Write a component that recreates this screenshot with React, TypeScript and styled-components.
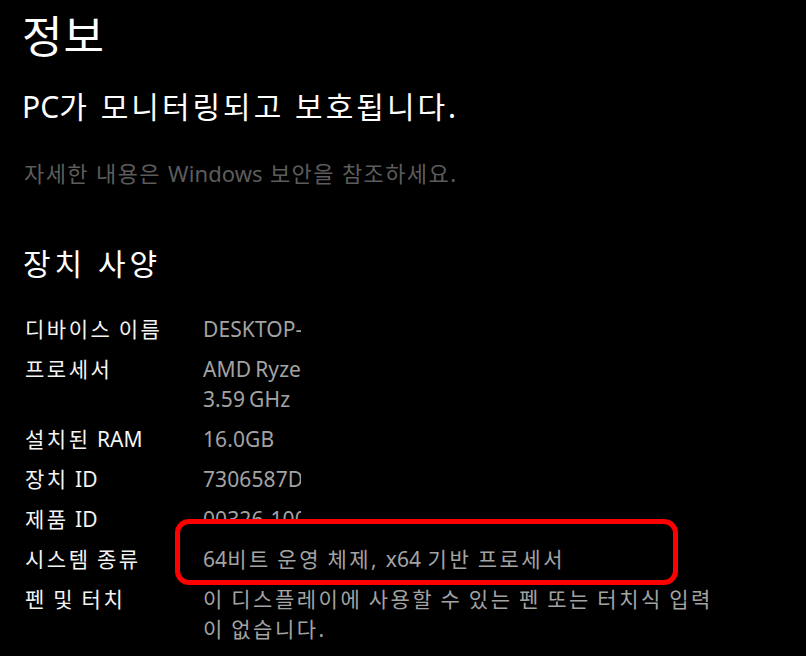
import React from "react";
import styled, { createGlobalStyle } from "styled-components";

const Global = createGlobalStyle`
  html, body { margin: 0; padding: 0; background: #000; }
  body {
    font-family: "Noto Sans", "Noto Sans CJK KR", sans-serif;
    color: #fff;
    width: 806px;
    height: 656px;
    overflow: hidden;
  }
`;

const Page = styled.main`
  display: flex;
  flex-direction: column;
  padding: 6px 0 0 22px;
`;

const Title = styled.h1`
  margin: 0;
  font-size: 44px;
  font-weight: 400;
  line-height: 60px;
  letter-spacing: 1px;
  color: #fff;
`;

const Headline = styled.h2`
  margin: 21px 0 0;
  font-size: 30px;
  font-weight: 400;
  line-height: 40px;
  letter-spacing: 3px;
  color: #fff;
`;

const Hint = styled.p`
  margin: 31px 0 0 2px;
  font-size: 22px;
  line-height: 30px;
  letter-spacing: 1.4px;
  color: #5c5c5c;
`;

const SectionTitle = styled.h2`
  margin: 56px 0 0 1px;
  font-size: 30px;
  font-weight: 400;
  line-height: 40px;
  letter-spacing: 4px;
  color: #fff;
`;

const Latin = styled.span`
  letter-spacing: 0.1px;
`;

const Specs = styled.dl`
  margin: 30px 0 0 3px;
  display: grid;
  grid-template-columns: 178px 522px;
  row-gap: 10px;
  font-size: 21px;
  line-height: 30px;
  letter-spacing: 2.5px;
  word-spacing: -1.5px;
`;

const Label = styled.dt`
  margin: 0;
  color: #f4f4f4;
`;

const Value = styled.dd<{ $clip?: boolean }>`
  margin: 0;
  position: relative;
  color: #a3a3a3;
  ${(p) =>
    p.$clip &&
    `
    max-width: 98px;
    overflow: hidden;
    white-space: nowrap;
  `}
`;

const ClipLine = styled.span`
  display: block;
  max-width: 98px;
  overflow: hidden;
  white-space: nowrap;
`;

const Highlight = styled.span`
  position: absolute;
  top: -25px;
  left: -28px;
  width: 503px;
  height: 66px;
  box-sizing: border-box;
  border: 5px solid #ff0000;
  border-radius: 14px;
  background: #000;
  z-index: 1;
`;

const Front = styled.span`
  position: relative;
  z-index: 2;
`;

export default function App() {
  return (
    <>
      <Global />
      <Page>
        <Title>정보</Title>
        <Headline>
          <Latin>PC</Latin>가 모니터링되고 보호됩니다.
        </Headline>
        <Hint>
          자세한 내용은 <Latin>Windows</Latin> 보안을 참조하세요.
        </Hint>
        <SectionTitle>장치 사양</SectionTitle>
        <Specs>
          <Label>디바이스 이름</Label>
          <Value $clip>
            <Latin>DESKTOP-R7Q2M5A</Latin>
          </Value>

          <Label>프로세서</Label>
          <Value>
            <ClipLine>
              <Latin>AMD Ryzen 5 3600 6-Core Processor</Latin>
            </ClipLine>
            <Latin>3.59 GHz</Latin>
          </Value>

          <Label>
            설치된 <Latin>RAM</Latin>
          </Label>
          <Value>
            <Latin>16.0GB</Latin>
          </Value>

          <Label>
            장치 <Latin>ID</Latin>
          </Label>
          <Value $clip>
            <Latin>7306587D-4C2A-4E1B-9F0A</Latin>
          </Value>

          <Label>
            제품 <Latin>ID</Latin>
          </Label>
          <Value $clip>
            <Latin>00326-10000-00000-AA123</Latin>
          </Value>

          <Label>시스템 종류</Label>
          <Value>
            <Highlight />
            <Front>
              <Latin>64</Latin>비트 운영 체제, <Latin>x64</Latin> 기반 프로세서
            </Front>
          </Value>

          <Label>펜 및 터치</Label>
          <Value>이 디스플레이에 사용할 수 있는 펜 또는 터치식 입력이 없습니다.</Value>
        </Specs>
      </Page>
    </>
  );
}
